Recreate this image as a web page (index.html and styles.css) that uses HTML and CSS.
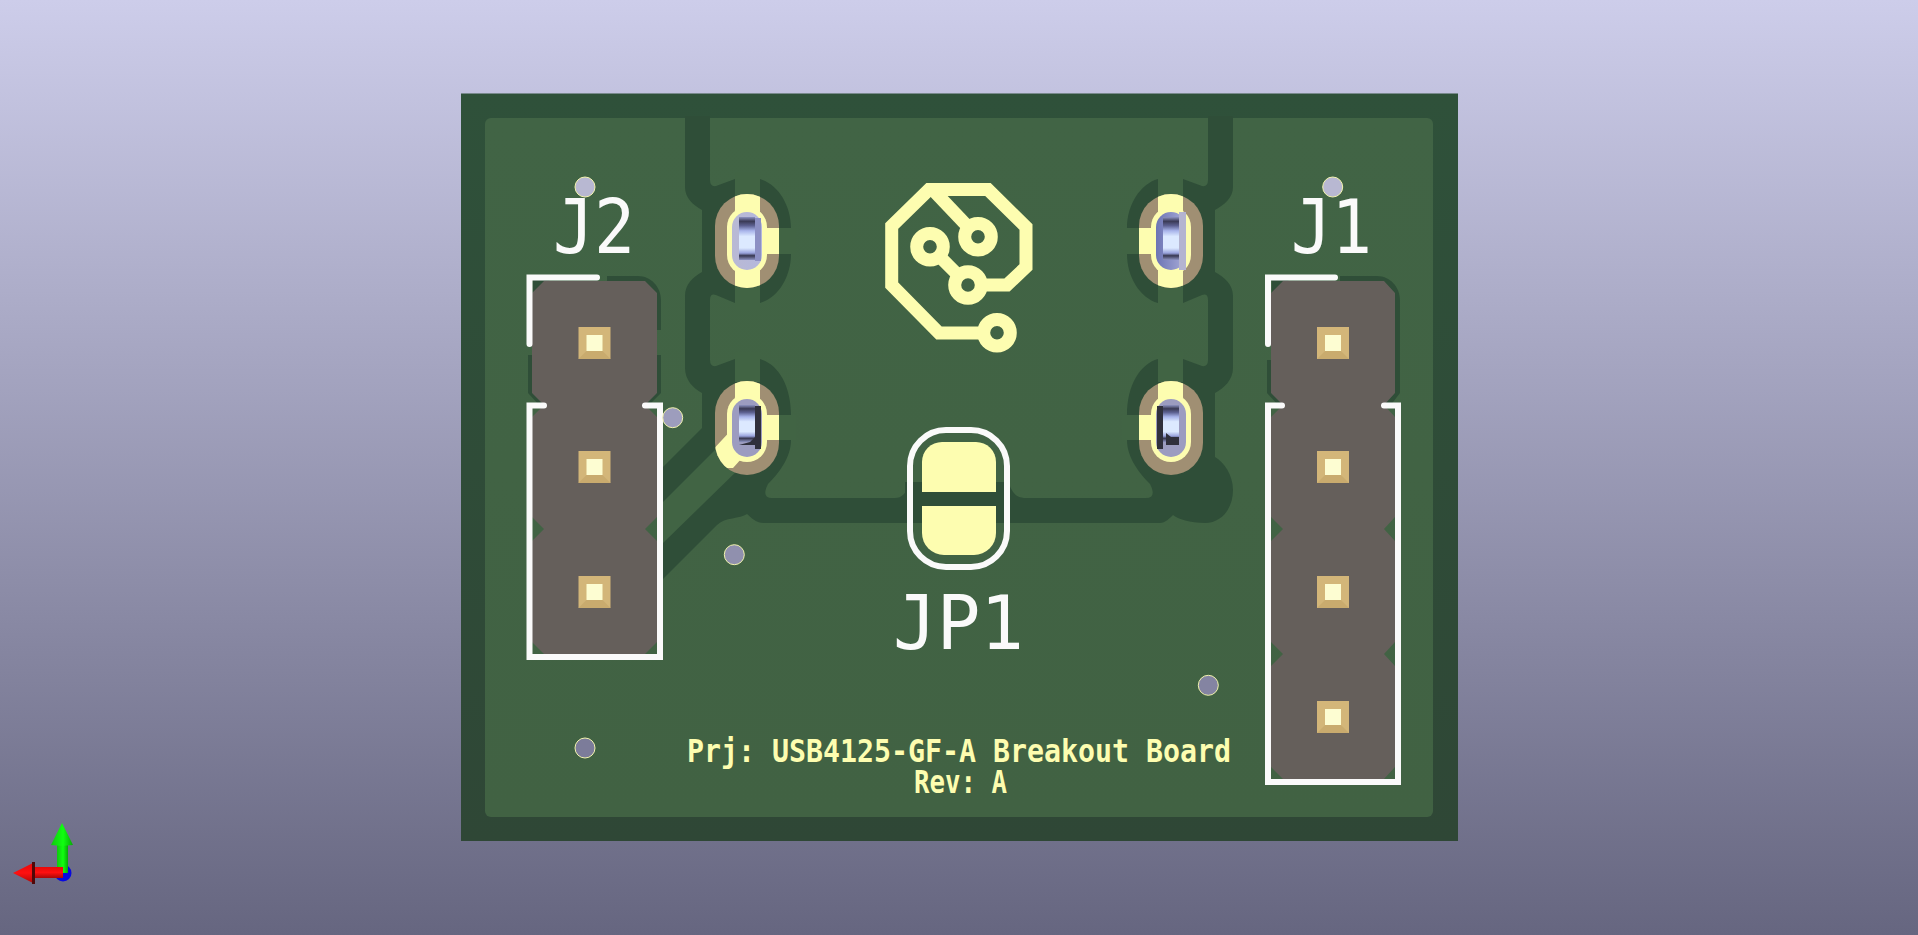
FILE: index.html
```html
<!DOCTYPE html>
<html lang="en">
<head>
<meta charset="utf-8">
<title>3D Viewer</title>
<link rel="stylesheet" href="styles.css">
</head>
<body>
<main class="viewport">
<svg class="scene" viewBox="0 0 1918 935" width="1918" height="935" xmlns="http://www.w3.org/2000/svg">
  <defs>
    <linearGradient id="boardDark" x1="0" y1="0" x2="0" y2="1"><stop offset="0" stop-color="#2f513a"/><stop offset="1" stop-color="#2f4736"/></linearGradient>
    <linearGradient id="boardLight" x1="0" y1="0" x2="0" y2="1"><stop offset="0" stop-color="#416445"/><stop offset="1" stop-color="#416243"/></linearGradient>
    <linearGradient id="barrel" x1="0" y1="0" x2="0" y2="1">
      <stop offset="0" stop-color="#8d93c2"/><stop offset=".1" stop-color="#3a3a55"/><stop offset=".2" stop-color="#5c6090"/><stop offset=".32" stop-color="#a8b4ea"/><stop offset=".45" stop-color="#dce9ff"/><stop offset=".72" stop-color="#dce9ff"/><stop offset=".84" stop-color="#98a2dc"/><stop offset=".9" stop-color="#383850"/><stop offset="1" stop-color="#8d93c2"/>
    </linearGradient>
    <linearGradient id="sideL" x1="0" y1="0" x2="1" y2="0"><stop offset="0" stop-color="#b9b9d4"/><stop offset="1" stop-color="#b4b8dc"/></linearGradient>
    <linearGradient id="sideR" x1="0" y1="0" x2="1" y2="0"><stop offset="0" stop-color="#6c74b4"/><stop offset="1" stop-color="#a8acd8"/></linearGradient>
    <linearGradient id="arrowGreen" x1="0" y1="0" x2="1" y2="0"><stop offset="0" stop-color="#10c810"/><stop offset=".55" stop-color="#10ff10"/><stop offset="1" stop-color="#08a808"/></linearGradient>
    <linearGradient id="arrowRed" x1="0" y1="0" x2="0" y2="1"><stop offset="0" stop-color="#e80808"/><stop offset=".5" stop-color="#ff1010"/><stop offset="1" stop-color="#a80808"/></linearGradient>
    <clipPath id="padClip"><rect x="-32" y="-47" width="64" height="94" rx="32"/></clipPath>
  </defs>

  <!-- board -->
  <rect class="board" x="461" y="93.5" width="997" height="747.5" fill="url(#boardDark)"/>
  <rect x="485" y="118" width="948" height="699" rx="6" fill="url(#boardLight)"/>

  <!-- zone clearances -->
  <path class="dark" d="M685,116 H710 V180 Q710,187 716,186 L735,179 H760 C778,184 791,205 791,228 V254 C791,277 778,298 760,303 H735 L716,295 Q710,293 710,300 V360 Q710,367 716,366 L735,359 H760 C778,364 791,385 791,415 V440 C791,458 778,474 768,484 Q761,498 772,498 H895 Q905,498 909,484 V482 H912 V523 H765 C755,523 752,518 747,514 C740,519 725,517 717,525 L662,580 V468 L702,428 V393 C693,388 685,380 685,368 V296 C685,284 693,277 702,272 V210 C693,205 685,198 685,187 Z"/>
  <path class="dark" d="M1233,116 H1208 V180 Q1208,187 1202,186 L1183,179 H1158 C1140,184 1127,205 1127,228 V254 C1127,277 1140,298 1158,303 H1183 L1202,295 Q1208,293 1208,300 V360 Q1208,367 1202,366 L1183,359 H1158 C1140,364 1127,385 1127,415 V440 C1127,458 1140,474 1150,484 Q1157,498 1146,498 H1024 Q1014,498 1009,484 V482 H905 V523 H1160 C1165,523 1170,518 1173,515 C1178,519 1190,523 1205,523 C1222,523 1233,508 1233,490 C1233,475 1224,462 1215,457 V393 C1224,388 1233,380 1233,368 V296 C1233,284 1224,277 1215,272 V210 C1224,205 1233,198 1233,187 Z"/>

  <!-- thermal spokes -->
  <g class="light">
    <rect x="735" y="172" width="25" height="30"/><rect x="735" y="280" width="25" height="30"/><rect x="772" y="228" width="24" height="26"/>
    <rect x="735" y="352" width="25" height="30"/><rect x="772" y="415" width="24" height="25"/>
    <rect x="1158" y="172" width="25" height="30"/><rect x="1158" y="280" width="25" height="30"/><rect x="1122" y="228" width="24" height="26"/>
    <rect x="1158" y="352" width="25" height="30"/><rect x="1122" y="415" width="24" height="25"/>
    <polygon points="662,503 730,435 742,466 662,544"/>
  </g>

  <!-- J1 pin 1 and J2 pin 1 clearances -->
  <path class="dark" d="M607,276 H638 C651,276 661,287 661,300 V330 H640 V281 H607 Z"/>
  <path class="dark" d="M640,355 H661 V393 L648,406 H540 L528,393 V355 H540 V400 H640 Z"/>
  <polygon class="dark" points="533,278 552,278 533,297"/>
  <path class="dark" d="M1340,276 H1377 C1390,276 1400,287 1400,300 V393 L1390,406 H1279 L1267,393 V360 H1280 V400 H1380 V281 H1340 Z"/>
  <polygon class="dark" points="1272,278 1291,278 1272,297"/>

  <!-- connector courtyards -->
  <polygon class="fab" points="544,281 645,281 657,293 657,393 645,405 657,417 657,517 645,529 657,541 657,642 645,654 544,654 532,642 532,541 544,529 532,517 532,417 544,405 532,393 532,293"/>
  <polygon class="fab" points="1283,281 1384,281 1395,293 1395,393 1384,405 1395,417 1395,517 1384,529 1395,541 1395,642 1384,654 1395,666 1395,767 1384,779 1283,779 1271,767 1271,666 1283,654 1271,642 1271,541 1283,529 1271,517 1271,417 1283,405 1271,393 1271,293"/>

  <!-- through-hole pads -->
  <g transform="translate(747,241)">
    <rect class="tan" x="-32" y="-47" width="64" height="94" rx="32"/>
    <g clip-path="url(#padClip)" class="copper"><rect x="-12" y="-47" width="25" height="94"/><rect x="10" y="-13" width="24" height="26"/></g>
    <rect class="copper" x="-20" y="-34" width="40" height="68" rx="20"/>
    <rect x="-15" y="-29" width="30" height="58" rx="15" fill="url(#sideL)"/>
    <rect x="-8" y="-24" width="16" height="43" fill="url(#barrel)"/>
    <rect x="8" y="-23" width="6" height="43" fill="#8c90c4"/>
  </g>
  <g transform="translate(747,428)">
    <rect class="tan" x="-32" y="-47" width="64" height="94" rx="32"/>
    <g clip-path="url(#padClip)" class="copper"><rect x="-12" y="-47" width="25" height="30"/><rect x="10" y="-13" width="24" height="25"/><polygon points="-40,28 -12,-2 12,20 -5,30 -14,40 -22,40"/></g>
    <rect class="copper" x="-20" y="-34" width="40" height="68" rx="20"/>
    <rect x="-15" y="-29" width="30" height="58" rx="15" class="holeShade"/>
    <rect x="-8" y="-23" width="16" height="37" fill="url(#barrel)"/>
    <rect x="8" y="-22" width="6" height="43" fill="#30303c"/>
    <path class="holeDark" d="M-8,17 H8 V9 L3,14 Z"/>
  </g>
  <g transform="translate(1171,241)">
    <rect class="tan" x="-32" y="-47" width="64" height="94" rx="32"/>
    <g clip-path="url(#padClip)" class="copper"><rect x="-13" y="-47" width="25" height="94"/><rect x="-34" y="-13" width="24" height="26"/></g>
    <rect class="copper" x="-20" y="-34" width="40" height="68" rx="20"/>
    <rect x="-15" y="-29" width="30" height="58" rx="15" fill="url(#sideR)"/>
    <rect x="-8" y="-24" width="16" height="43" fill="url(#barrel)"/>
    <rect x="8" y="-29" width="7" height="58" fill="#b4b4d0"/>
  </g>
  <g transform="translate(1171,428)">
    <rect class="tan" x="-32" y="-47" width="64" height="94" rx="32"/>
    <g clip-path="url(#padClip)" class="copper"><rect x="-13" y="-47" width="25" height="30"/><rect x="-34" y="-13" width="24" height="25"/></g>
    <rect class="copper" x="-20" y="-34" width="40" height="68" rx="20"/>
    <rect x="-15" y="-29" width="30" height="58" rx="15" class="holeShade"/>
    <rect x="-8" y="-23" width="16" height="37" fill="url(#barrel)"/>
    <rect x="-14" y="-22" width="6" height="43" fill="#30303c"/>
    <path class="holeDark" d="M-8,17 H8 V9 H0 L-5,5 V17 Z"/>
  </g>

  <!-- square pins -->
  <g class="pins">
    <g transform="translate(594.5,343)"><rect class="pinBase" x="-16" y="-16" width="32" height="32"/><path class="pinLow" d="M-16,16 L-8,8 H8 L16,16 Z"/><rect class="pinTop" x="-8" y="-8" width="16" height="16"/></g>
    <g transform="translate(594.5,467)"><rect class="pinBase" x="-16" y="-16" width="32" height="32"/><path class="pinLow" d="M-16,16 L-8,8 H8 L16,16 Z"/><rect class="pinTop" x="-8" y="-8" width="16" height="16"/></g>
    <g transform="translate(594.5,592)"><rect class="pinBase" x="-16" y="-16" width="32" height="32"/><path class="pinLow" d="M-16,16 L-8,8 H8 L16,16 Z"/><rect class="pinTop" x="-8" y="-8" width="16" height="16"/></g>
    <g transform="translate(1333,343)"><rect class="pinBase" x="-16" y="-16" width="32" height="32"/><path class="pinLow" d="M-16,16 L-8,8 H8 L16,16 Z"/><rect class="pinTop" x="-8" y="-8" width="16" height="16"/></g>
    <g transform="translate(1333,467)"><rect class="pinBase" x="-16" y="-16" width="32" height="32"/><path class="pinLow" d="M-16,16 L-8,8 H8 L16,16 Z"/><rect class="pinTop" x="-8" y="-8" width="16" height="16"/></g>
    <g transform="translate(1333,592)"><rect class="pinBase" x="-16" y="-16" width="32" height="32"/><path class="pinLow" d="M-16,16 L-8,8 H8 L16,16 Z"/><rect class="pinTop" x="-8" y="-8" width="16" height="16"/></g>
    <g transform="translate(1333,717)"><rect class="pinBase" x="-16" y="-16" width="32" height="32"/><path class="pinLow" d="M-16,16 L-8,8 H8 L16,16 Z"/><rect class="pinTop" x="-8" y="-8" width="16" height="16"/></g>
  </g>

  <!-- silkscreen outlines -->
  <g class="silk">
    <path d="M597,277.5 H529.5 V344"/>
    <path d="M544,405.5 H529.5 V657 H660 V405.5 H645"/>
    <path d="M1335,277.5 H1268 V344"/>
    <path d="M1282,405.5 H1268 V782 H1398 V405.5 H1384"/>
    <rect x="910" y="430" width="97" height="137" rx="36"/>
  </g>

  <!-- solder jumper pads -->
  <path class="copper" d="M942,442 H976 A20,20 0 0 1 996,462 V492 H922 V462 A20,20 0 0 1 942,442 Z"/>
  <path class="copper" d="M922,506 H996 V533 A22,22 0 0 1 974,555 H944 A22,22 0 0 1 922,533 Z"/>

  <!-- logo -->
  <g class="logo">
    <path d="M983,285 H1007 L1026,267 V227 L988,189.5 H929 L891.7,226 V285 L939,333 H982"/>
    <path d="M933,190 L971,230"/>
    <path d="M940,257 L958,275"/>
    <circle cx="978" cy="236.7" r="13.3"/>
    <circle cx="930" cy="246.7" r="13.3"/>
    <circle cx="968" cy="285" r="13.3"/>
    <circle cx="997" cy="332.7" r="13.3"/>
  </g>

  <!-- vias -->
  <circle class="via" cx="585" cy="187" r="10" fill="#b8b8d2"/>
  <circle class="via" cx="672.7" cy="417.7" r="10" fill="#9d9dbd"/>
  <circle class="via" cx="734.3" cy="554.7" r="10" fill="#9090ae"/>
  <circle class="via" cx="585" cy="748" r="10" fill="#7c7c9a"/>
  <circle class="via" cx="1208.3" cy="685.3" r="10" fill="#8484a2"/>
  <circle class="via" cx="1332.7" cy="187" r="10" fill="#b8b8d2"/>

  <!-- texts -->
  <text class="ref" x="553" y="253" textLength="82" lengthAdjust="spacingAndGlyphs">J2</text>
  <text class="ref" x="1291" y="253" textLength="81" lengthAdjust="spacingAndGlyphs">J1</text>
  <text class="ref" x="893" y="649" textLength="131" lengthAdjust="spacingAndGlyphs">JP1</text>
  <text class="fabText" x="687" y="762" textLength="544" lengthAdjust="spacingAndGlyphs">Prj: USB4125-GF-A Breakout Board</text>
  <text class="fabText" x="914" y="793" textLength="93" lengthAdjust="spacingAndGlyphs">Rev: A</text>

  <!-- axis gizmo -->
  <circle cx="63" cy="873" r="8.5" fill="#0808e0"/>
  <rect x="57" y="843" width="11" height="30" fill="url(#arrowGreen)"/>
  <polygon points="62,823 73,845 62,846 51,845" fill="url(#arrowGreen)"/>
  <rect x="33" y="867" width="30" height="11" fill="url(#arrowRed)"/>
  <polygon points="13,873 35,862 35,884" fill="url(#arrowRed)"/>
  <rect x="32" y="862" width="3" height="22" fill="#500808"/>
</svg>
</main>
</body>
</html>
```
FILE: styles.css
```css
html, body {
  margin: 0;
  padding: 0;
  height: 100%;
  overflow: hidden;
}
.viewport {
  width: 1918px;
  height: 935px;
  background: linear-gradient(180deg, #cdcdea 0%, #666680 100%);
}
.scene {
  display: block;
}
.dark {
  fill: #2f4e38;
}
.light {
  fill: #416444;
}
.fab {
  fill: #655f5b;
}
.tan {
  fill: #a08f73;
}
.copper {
  fill: #fdfdb0;
}
.holeShade {
  fill: #9c9cc0;
}
.holeDark {
  fill: #30303c;
}
.pinBase {
  fill: #d3b679;
}
.pinLow {
  fill: #c9ab6e;
}
.pinTop {
  fill: #fdfdd2;
}
.silk {
  fill: none;
  stroke: #fafafa;
  stroke-width: 6;
  stroke-linecap: round;
  stroke-linejoin: miter;
}
.logo {
  fill: none;
  stroke: #fdfdb0;
  stroke-width: 13;
  stroke-linejoin: miter;
}
.via {
  stroke: #f4f4b0;
  stroke-width: 1;
}
.ref {
  font-family: "DejaVu Sans Mono", monospace;
  font-size: 75px;
  fill: #fafafa;
}
.fabText {
  font-family: "DejaVu Sans Mono", monospace;
  font-size: 32.5px;
  font-weight: 700;
  fill: #fdfdb0;
}
```
